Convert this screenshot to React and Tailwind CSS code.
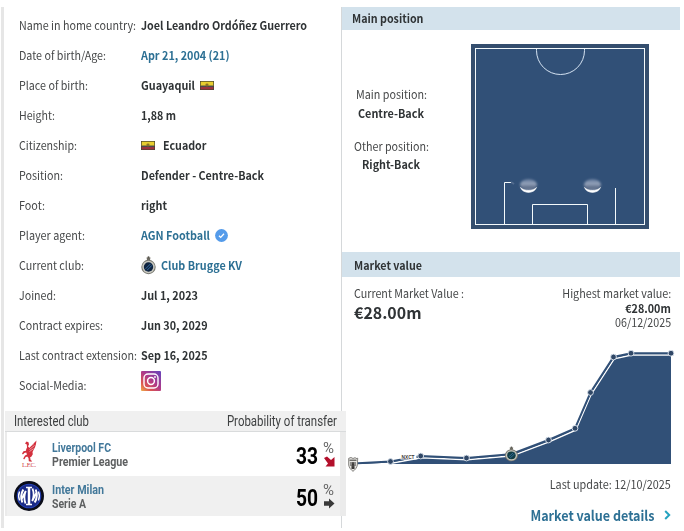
import { useLayoutEffect, useRef, useState } from 'react';

// Text squeezed or widened to an exact width.
function Fit({ w, className = '', origin = 'left', children }) {
  const ref = useRef(null);
  const [scale, setScale] = useState(1);
  useLayoutEffect(() => {
    if (ref.current.offsetWidth) setScale(w / ref.current.getBoundingClientRect().width);
  }, []);
  return (
    <span className="flex" style={{ width: w, justifyContent: origin === 'right' ? 'flex-end' : 'flex-start' }}>
      <span
        ref={ref}
        className={'inline-block shrink-0 whitespace-nowrap ' + className}
        style={{ transform: `scaleX(${scale})`, transformOrigin: origin }}
      >
        {children}
      </span>
    </span>
  );
}

function Flag() {
  return (
    <svg width="14" height="9" viewBox="0 0 14 9" className="block">
      <rect width="14" height="9" fill="#4a4630" />
      <rect x="0.7" y="0.7" width="12.6" height="4.2" fill="#e8cf2f" />
      <rect x="0.7" y="4.6" width="12.6" height="1.8" fill="#4b4a50" />
      <rect x="0.7" y="6" width="12.6" height="2.4" fill="#9b3340" />
      <ellipse cx="7" cy="4" rx="1.6" ry="1.4" fill="#8b7226" />
    </svg>
  );
}

function Verified() {
  return (
    <svg width="13" height="13" viewBox="0 0 13 13" className="block">
      <circle cx="6.5" cy="6.5" r="6.4" fill="#549bea" />
      <path d="M4 6.700l1.700 1.700 3.300-3.600" fill="none" stroke="#fff" strokeWidth="1.3" />
    </svg>
  );
}

function BruggeShapes({ inner = '#10243f' }) {
  return (
    <>
      <path d="M5.5 1.5h4l-.6 3H6.100z" fill="#6d6b62" />
      <circle cx="7.5" cy="1.300" r="1" fill="#57554c" />
      <circle cx="7.500" cy="11" r="7.200" fill="#77776f" />
      <circle cx="7.500" cy="11" r="6.200" fill="#c9c9c1" />
      <circle cx="7.500" cy="11" r="4.700" fill={inner} />
      <path d="M4.600 12.800l5-5M6 14.300l5-5" stroke="#356fa5" strokeWidth="1" />
    </>
  );
}

function Brugge() {
  return (
    <svg width="15" height="19" viewBox="0 0 15 19" className="block">
      <BruggeShapes />
    </svg>
  );
}

function Instagram() {
  return (
    <svg width="20" height="20" viewBox="0 0 20 20" className="block">
      <defs>
        <linearGradient id="ig" x1="0" y1="1" x2="0.9" y2="0">
          <stop offset="0" stopColor="#eeb04c" />
          <stop offset="0.25" stopColor="#dc5550" />
          <stop offset="0.55" stopColor="#b03a88" />
          <stop offset="1" stopColor="#6b44b8" />
        </linearGradient>
      </defs>
      <rect width="20" height="20" rx="1" fill="url(#ig)" />
      <rect x="3" y="3" width="14" height="14" rx="4" fill="none" stroke="#fff" strokeWidth="1.4" />
      <circle cx="10" cy="10" r="3.400" fill="none" stroke="#fff" strokeWidth="1.5" />
      <circle cx="14" cy="6" r="0.9" fill="#fff" />
    </svg>
  );
}

function Liverpool() {
  return (
    <svg width="16" height="28" viewBox="0 0 16 28" className="block">
      <g fill="#d3303d">
        <path d="M4 3.500l1.500-2 2 .7.500 2.300-1 1.800 1.200 1.500L15.500.500l-.6 4-.9 2.800-1.200 2.200-1.300 2.500.3 2.300-1.500 2.400-1.200.6.500 2.700 1.400 1-.6.700-2.600-.4L7.500 18l-1.300-1.500-1.700.8-1 2-1.300-.400.600-1.300 1.200-2 2-1.200-.8-1.800-1.800.3-1.500 1.500-.9-.8 1.500-2.300 2.500-.5.200-1.600L6 7.500 5.800 4.600z" />
      </g>
      <path d="M8 7.500l5-4M8.500 9.500l5-4M8.500 11.500l4-2.800" stroke="#fff" strokeWidth="0.500" />
      <text x="8" y="26.500" textAnchor="middle" textLength="14" fontSize="6.500" fontFamily="Liberation Serif, serif" fill="#cf3a45">L.F.C.</text>
    </svg>
  );
}

function Inter() {
  return (
    <svg width="30" height="30" viewBox="0 0 30 30" className="block">
      <circle cx="15" cy="15" r="15" fill="#0a0c18" />
      <circle cx="15" cy="15" r="12.300" fill="#2440b8" />
      <circle cx="15" cy="15" r="11.300" fill="#1a2a86" />
      <g fill="none" stroke="#fff">
        <path d="M12 6.500h6M12 23.500h6" strokeWidth="1.600" />
        <path d="M15 6.500v17" strokeWidth="2.500" />
        <path d="M8.300 21.500c-1.600-4-1.300-9 1-13" strokeWidth="2" />
        <path d="M11.500 22.500c-1.500-4-1.200-9 .3-12.500l-4.200 8" strokeWidth="1.800" />
        <path d="M21.700 8.500c1.600 4 1.300 9-1 13" strokeWidth="2" />
        <path d="M18.500 7.500c1.500 4 1.200 9-.3 12.500l4.200-8" strokeWidth="1.800" />
        <path d="M5.600 10.500c-1.300 3-1.300 6 0 9M24.400 10.500c1.300 3 1.300 6 0 9" strokeWidth="1.400" />
      </g>
    </svg>
  );
}

const facts = [
  ['Name in home country:', 117, 'Joel Leandro Ordóñez Guerrero', 166],
  ['Date of birth/Age:', 87, 'Apr 21, 2004 (21)', 88.5, 'link'],
  ['Place of birth:', 69, 'Guayaquil', 54, 'flagAfter'],
  ['Height:', 36, '1,88 m', 35],
  ['Citizenship:', 58, 'Ecuador', 43.5, 'flagBefore'],
  ['Position:', 44, 'Defender - Centre-Back', 123],
  ['Foot:', 26, 'right', 26],
  ['Player agent:', 66, 'AGN Football', 69, 'agent'],
  ['Current club:', 65, 'Club Brugge KV', 81, 'club'],
  ['Joined:', 37, 'Jul 1, 2023', 57],
  ['Contract expires:', 84, 'Jun 30, 2029', 66.500],
  ['Last contract extension:', 118, 'Sep 16, 2025', 66.500],
  ['Social-Media:', 67.500, null, 0, 'social'],
];

function Fact({ row }) {
  const [label, lw, value, vw, kind] = row;
  const link = kind === 'link' || kind === 'agent' || kind === 'club';
  return (
    <div className="flex h-[30px] items-center">
      <div className="w-[122.500px] shrink-0">
        <Fit w={lw}>{label}</Fit>
      </div>
      <div className="flex items-center">
        {kind === 'flagBefore' && <div className="mr-2"><Flag /></div>}
        {kind === 'club' && <div className="mr-[5px]"><Brugge /></div>}
        {value && (
          <Fit w={vw} className={link ? 'font-bold text-[#2d7094]' : 'font-bold text-[#2f3335]'}>{value}</Fit>
        )}
        {kind === 'flagAfter' && <div className="ml-[5px]"><Flag /></div>}
        {kind === 'agent' && <div className="ml-[5px]"><Verified /></div>}
        {kind === 'social' && <div className="-mt-[9px]"><Instagram /></div>}
      </div>
    </div>
  );
}

function Club({ logo, name, nw, league, lw, pct, arrow }) {
  return (
    <div className="flex w-full items-center">
      <div className="flex w-[45px] items-center pl-[7px]">{logo}</div>
      <div className="flex flex-1 flex-col pt-[2px] text-[12px] leading-[14px] font-bold">
        <Fit w={nw} className="text-[#42789a]">{name}</Fit>
        <Fit w={lw} className="text-[#5d5f60]">{league}</Fit>
      </div>
      <div className="pt-[3px]"><Fit w={22} className="text-[24px] leading-7 font-bold text-black">{pct}</Fit></div>
      <div className="ml-[5px] flex w-[17px] flex-col items-start">
        <Fit w={11} className="text-[14px] leading-[14px] text-[#666]">%</Fit>
        <div className="mt-px ml-px">{arrow}</div>
      </div>
    </div>
  );
}

function Pitch() {
  return (
    <svg width="178" height="185" viewBox="471 44 178 185" className="block">
      <defs>
        <linearGradient id="ball" x1="0" y1="0" x2="0" y2="1">
          <stop offset="0" stopColor="#5f7699" />
          <stop offset="0.400" stopColor="#95a3ba" />
          <stop offset="0.700" stopColor="#5b6b87" />
          <stop offset="1" stopColor="#7b8ba5" />
        </linearGradient>
        <filter id="soft" x="-50%" y="-50%" width="200%" height="200%"><feGaussianBlur stdDeviation="1" /></filter>
      </defs>
      <rect x="471" y="44" width="178" height="185" fill="#344e6e" />
      <rect x="475.500" y="48.500" width="169" height="176" fill="#315077" stroke="#f4fafc" />
      <path d="M536.500 49v1.500a24 24 0 0 0 48 0V49" fill="none" stroke="#d5e3f2" />
      <path d="M504.500 224v-41.500h6.500M532.500 224v-19.500h55V224M615.500 224v-36" fill="none" stroke="#f4fafc" />
      <path d="M511 182l3 2" stroke="#7387a5" strokeWidth="2" opacity="0.500" />
      {[528.500, 592.500].map((x) => (
        <g key={x}>
          <ellipse cx={x} cy="185" rx="8.500" ry="6" fill="url(#ball)" filter="url(#soft)" />
          <path d={`M${x - 8} 187.500c2.500 6.500 13.500 6.500 16 0c-3.500 3.800-12.500 3.800-16 0z`} fill="#fff" stroke="#fff" strokeWidth="0.600" />
        </g>
      ))}
    </svg>
  );
}

const points = [
  [353, 463.500], [390.500, 461.500], [420.700, 456], [466.500, 458], [511.500, 454], [548.500, 440],
  [575, 428.300], [590.500, 392.500], [613.500, 357], [631, 353.200], [671, 353.200],
];
const line = points.map((p) => p.join(',')).join(' ');

function Chart() {
  return (
    <svg width="334" height="130" viewBox="346 346 334 130" className="block">
      <polygon points={`${line} 671,464 353,464`} fill="#315077" />
      <polyline points={line} fill="none" stroke="#fff" strokeWidth="1.400" transform="translate(0.700 1.800)" />
      <polyline points={line} fill="none" stroke="#315077" strokeWidth="2" />
      {points.filter((_, i) => i !== 0 && i !== 4).map(([x, y]) => (
        <circle key={x} cx={x} cy={y} r="2.900" fill="#304766" stroke="#dfe7ef" strokeWidth="0.900" />
      ))}
      <g transform="translate(348 457)">
        <path d="M.700 1.300L3 .500l2 1 2-.800 2 1 .700-.600-.300 6.800C9 10.500 7 13 5 14.300 3 13 1 10.500.700 8z" fill="#e6e5e2" stroke="#777572" strokeWidth="0.900" />
        <path d="M1.500 3.200h7M3 5v4M5 5l-1.200 5.500h2.400zM7 5v4M3.500 11.500h3" stroke="#393735" strokeWidth="1" fill="#4e4a48" />
      </g>
      <rect x="400.500" y="453.500" width="16" height="6" fill="#fff" />
      <text x="401.500" y="459" textLength="13" lengthAdjust="spacingAndGlyphs" fontSize="6" fontFamily="Liberation Sans, sans-serif" fontWeight="700" fill="#3f3b3a">NXCT</text>
      <g transform="translate(504.700 446.200) scale(0.900 0.830)">
        <BruggeShapes inner="#123d44" />
      </g>
    </svg>
  );
}

export default function App() {
  return (
    <div className="flex h-[531px] w-[684px] overflow-hidden bg-white pt-[7px] font-['Noto_Sans_CJK_SC',sans-serif] text-[11.5px] leading-4 text-[#454748]">
      <div className="ml-px flex h-[521px] w-[341px] shrink-0 flex-col border-r border-l-[3px] border-r-[#d5d8da] border-l-[#e6e6e6]">
        <div className="h-[404px] pt-[3px] pl-[14.5px]">
          {facts.map((r) => <Fact key={r[0]} row={r} />)}
        </div>
        <div className="relative z-10 ml-px h-[105px] w-[341px] bg-[#ebebeb] pr-[6px] pl-[2px] font-['Liberation_Sans_Narrow','Roboto',sans-serif]">
          <div className="-mr-[6px] -ml-[2px] flex h-[21px] items-center justify-between border-b border-[#d9dbdc] bg-[#f0f0f0] pr-[9px] pl-[9px] text-[15.5px] leading-[18px] text-[#3f4142]">
            <Fit w={75}>Interested club</Fit>
            <Fit w={110} origin="right">Probability of transfer</Fit>
          </div>
          <div className="flex h-11 bg-white">
            <Club
              logo={<div className="pl-[7px]"><Liverpool /></div>}
              name="Liverpool FC" nw={59} league="Premier League" lw={76} pct="33"
              arrow={
                <svg width="11" height="11" viewBox="0 0 11 11" className="block">
                  <path d="M0 2l3-1.500 4 3.500L10.500 1v9.500H1.500L4 7.500z" fill="#b30f2b" />
                </svg>
              }
            />
          </div>
          <div className="flex h-10 bg-[#f0f0f0]">
            <Club
              logo={<Inter />}
              name="Inter Milan" nw={52} league="Serie A" lw={34} pct="50"
              arrow={
                <svg width="11" height="11" viewBox="0 0 11 11" className="block">
                  <path d="M0 3.300h5V.600L10.500 5.500 5 10.400V7.700H0z" fill="#3a3a3a" />
                </svg>
              }
            />
          </div>
        </div>
      </div>
      <div className="flex w-[338px] shrink-0 flex-col">
        <div className="flex h-[23px] items-center bg-[#d3e2ec] pb-[2px] pl-[10px] font-bold text-[#2f3335]">
          <Fit w={71.500}>Main position</Fit>
        </div>
        <div className="flex h-[222px]">
          <div className="flex w-[129px] flex-col items-start">
            <div className="flex w-[98px] flex-col items-center pt-[56px]">
              <Fit w={71}>Main position:</Fit>
              <div className="mt-[3px] font-bold text-[#2f3335]"><Fit w={66}>Centre-Back</Fit></div>
              <div className="mt-[17px]"><Fit w={75}>Other position:</Fit></div>
              <div className="mt-[2px] font-bold text-[#2f3335]"><Fit w={58}>Right-Back</Fit></div>
            </div>
          </div>
          <div className="pt-[14px]"><Pitch /></div>
        </div>
        <div className="flex h-[25px] items-center bg-[#d3e2ec] pl-[11.5px] font-bold text-[#2f3335]">
          <Fit w={68}>Market value</Fit>
        </div>
        <div className="flex h-[69px] justify-between pt-[8px] pr-[9px] pl-[11.5px]">
          <div>
            <Fit w={110}>Current Market Value :</Fit>
            <div className="mt-[1px] text-[15.5px] leading-5 font-bold text-[#2f3335]"><Fit w={67.500}>€28.00m</Fit></div>
          </div>
          <div className="flex flex-col items-end">
            <Fit w={109} origin="right">Highest market value:</Fit>
            <div className="leading-[14px] font-bold text-[#2f3335]"><Fit w={45.500} origin="right">€28.00m</Fit></div>
            <div className="leading-[14px]"><Fit w={56} origin="right">06/12/2025</Fit></div>
          </div>
        </div>
        <div className="ml-1"><Chart /></div>
        <div className="flex justify-end pr-[9px]"><Fit w={121} origin="right">Last update: 12/10/2025</Fit></div>
        <div className="mt-[13px] flex items-center justify-end pr-[9px] text-[14px] leading-5 font-bold text-[#2d7094]">
          <Fit w={124} origin="right">Market value details</Fit>
          <svg width="7" height="10" viewBox="0 0 7 10" className="ml-[10px] block">
            <path d="M1.200 1l4 4-4 4" fill="none" stroke="#25a3c0" strokeWidth="2" />
          </svg>
        </div>
      </div>
    </div>
  );
}
